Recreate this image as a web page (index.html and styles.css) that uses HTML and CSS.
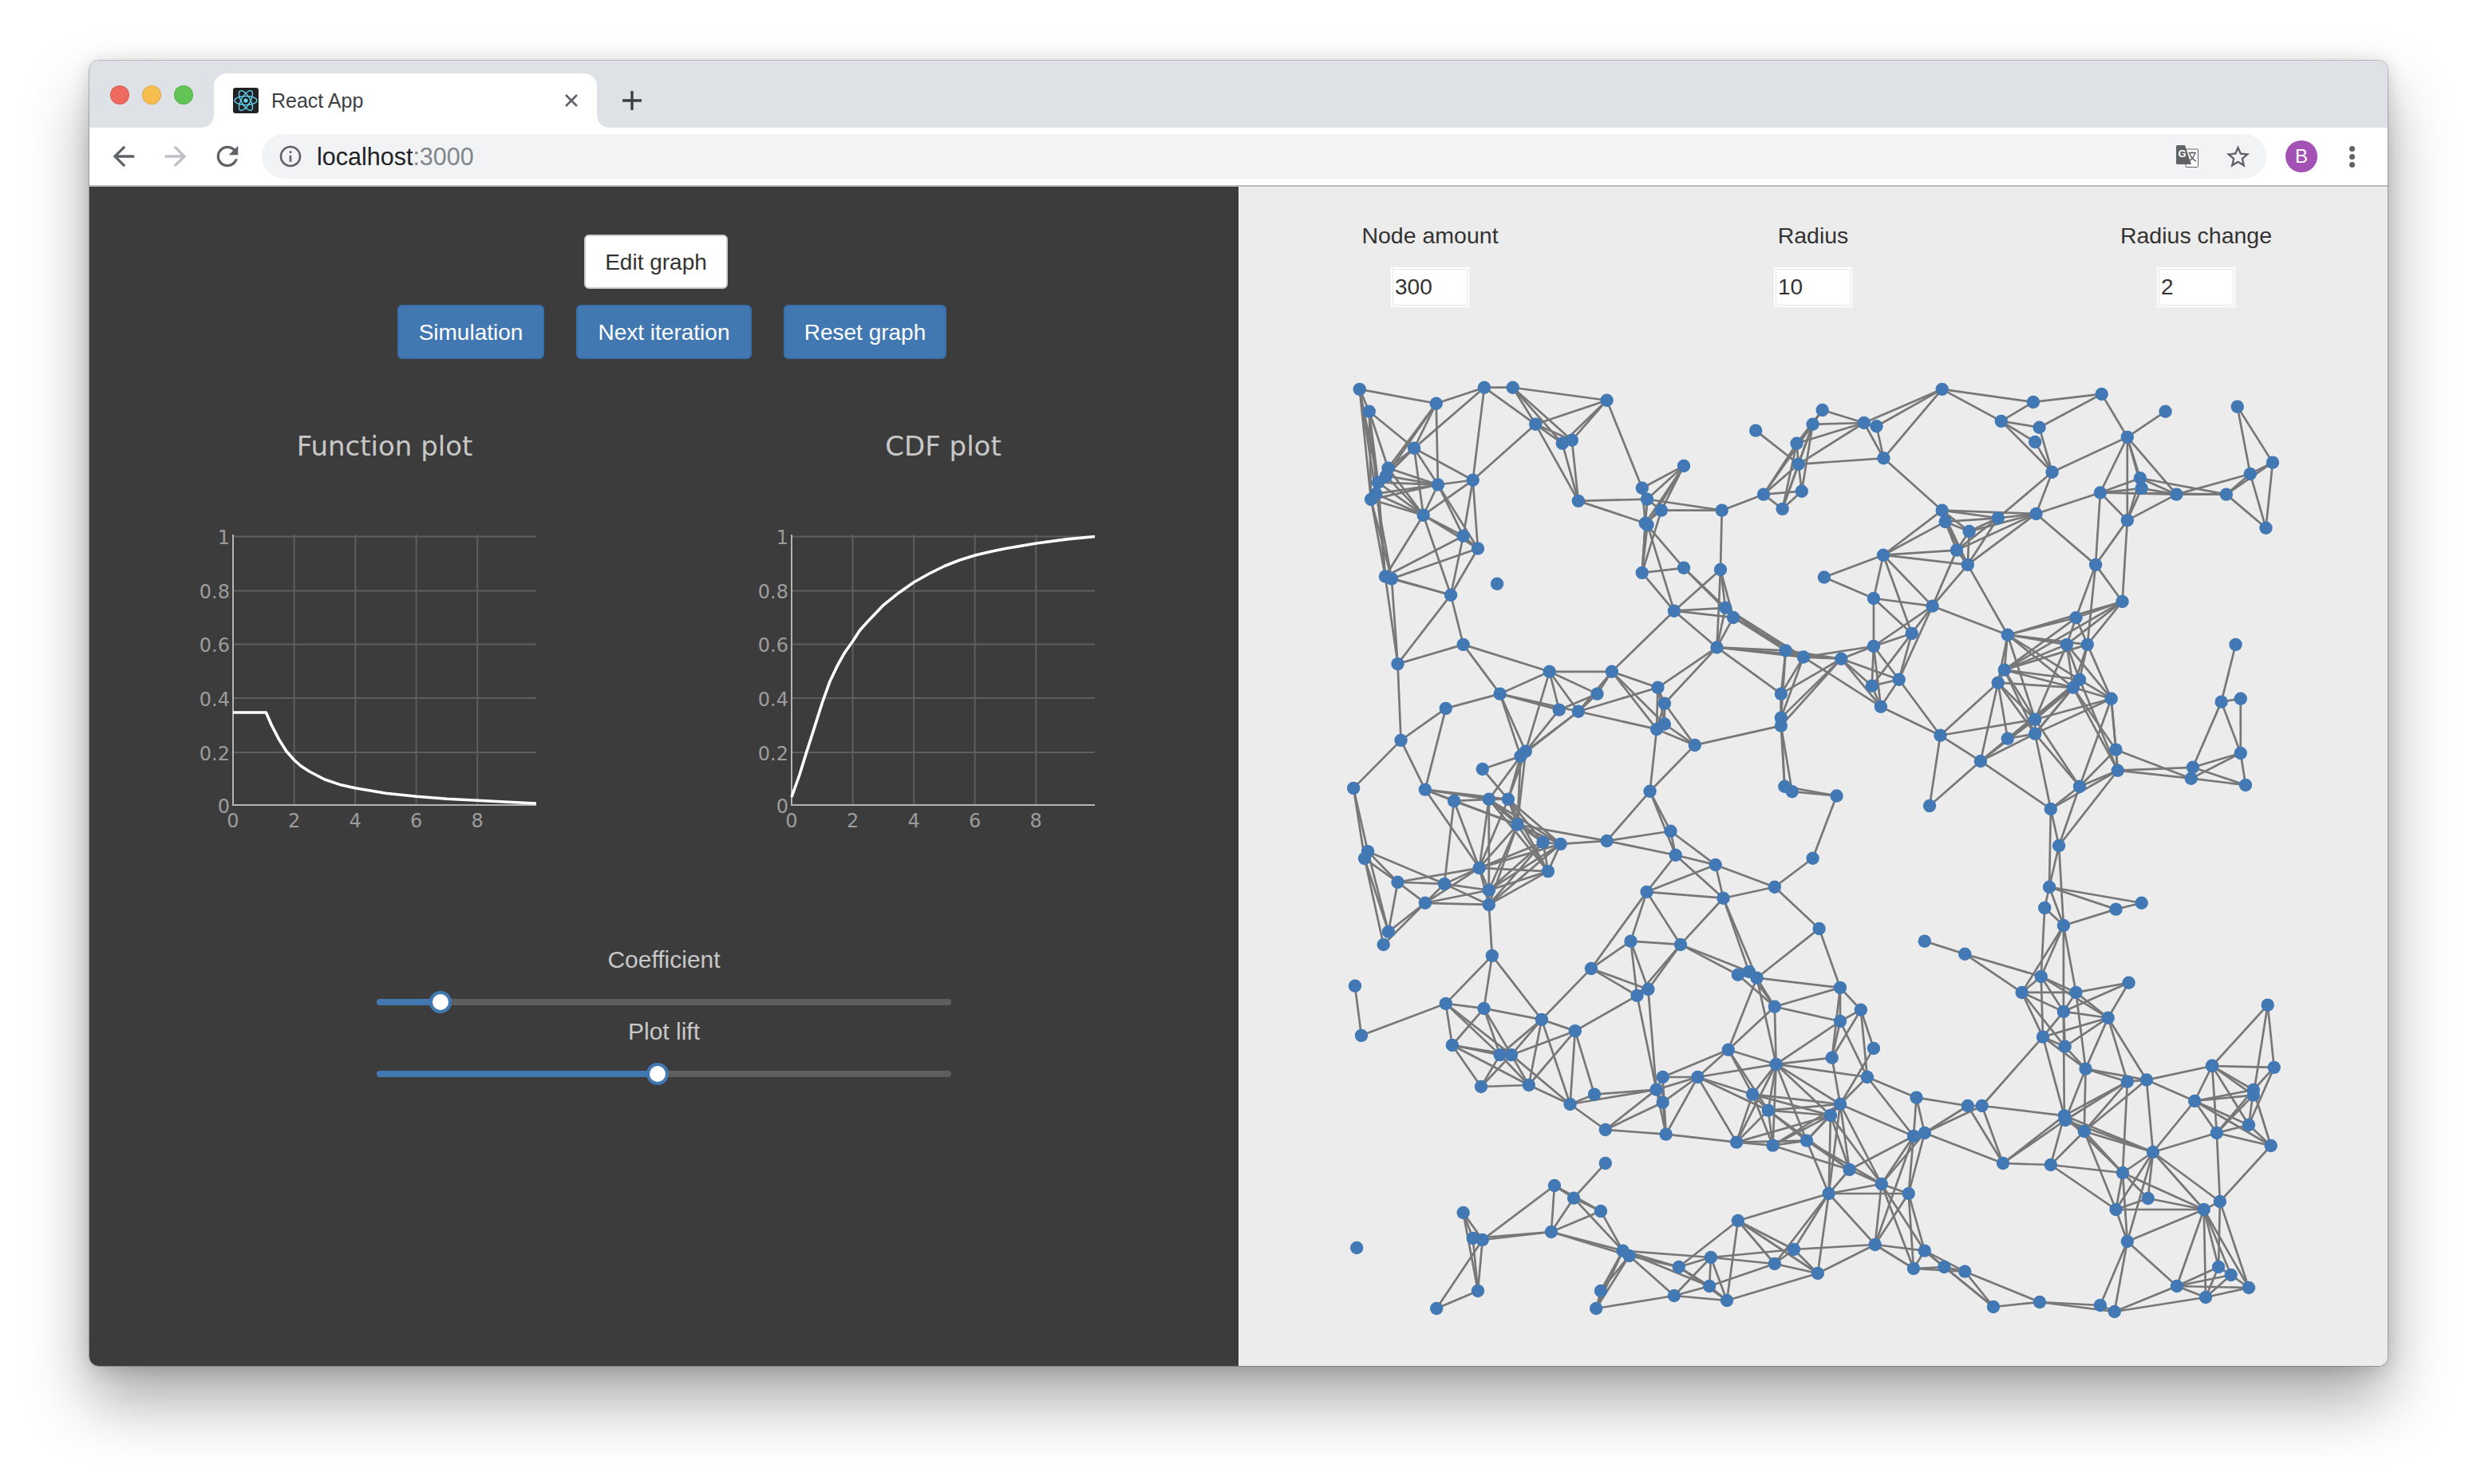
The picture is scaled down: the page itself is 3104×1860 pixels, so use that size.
FILE: index.html
```html
<!DOCTYPE html>
<html lang="en">
<head>
<meta charset="utf-8">
<title>React App</title>
<link rel="stylesheet" href="styles.css">
</head>
<body>
<div class="window">
  <div class="tabstrip">
    <div class="lights"><span class="light red"></span><span class="light yellow"></span><span class="light green"></span></div>
    <div class="tab">
      <svg class="favicon" viewBox="0 0 32 32"><rect width="32" height="32" rx="3" fill="#222"/><g fill="none" stroke="#61dafb" stroke-width="1.3"><ellipse cx="16" cy="16" rx="14" ry="5.6"/><ellipse cx="16" cy="16" rx="14" ry="5.6" transform="rotate(60 16 16)"/><ellipse cx="16" cy="16" rx="14" ry="5.6" transform="rotate(120 16 16)"/></g><circle cx="16" cy="16" r="2.6" fill="#61dafb"/></svg>
      <span class="tab-title">React App</span>
      <svg class="tab-close" viewBox="0 0 24 24"><path d="M5 5L19 19M19 5L5 19"/></svg>
    </div>
    <svg class="new-tab" viewBox="0 0 24 24"><path d="M12 1V23M1 12H23"/></svg>
  </div>
  <div class="toolbar">
    <svg class="nav" viewBox="0 0 24 24"><path d="M20 11H7.83l5.59-5.59L12 4l-8 8 8 8 1.41-1.41L7.83 13H20v-2z"/></svg>
    <svg class="nav nav-off" viewBox="0 0 24 24"><path d="M12 4l-1.41 1.41L16.17 11H4v2h12.17l-5.58 5.59L12 20l8-8z"/></svg>
    <svg class="nav" viewBox="0 0 24 24"><path d="M17.65 6.35C16.2 4.9 14.21 4 12 4c-4.42 0-7.99 3.58-7.99 8s3.57 8 7.99 8c3.73 0 6.84-2.55 7.73-6h-2.08c-.82 2.33-3.04 4-5.65 4-3.31 0-6-2.69-6-6s2.69-6 6-6c1.66 0 3.14.69 4.22 1.78L13 11h7V4l-2.35 2.35z"/></svg>
    <div class="omnibox">
      <svg class="info" viewBox="0 0 24 24"><path d="M11 7h2v2h-2zm0 4h2v6h-2zm1-9C6.48 2 2 6.48 2 12s4.48 10 10 10 10-4.48 10-10S17.52 2 12 2zm0 18c-4.41 0-8-3.59-8-8s3.59-8 8-8 8 3.59 8 8-3.59 8-8 8z"/></svg>
      <span class="url">localhost<span class="url-port">:3000</span></span>
      <svg class="translate" viewBox="0 0 28 28"><rect x="12" y="5" width="15.5" height="22.5" rx="1" fill="#fff" stroke="#5f6368" stroke-width="1"/><path d="M1.5 0H11L19 24H1.5A1.5 1.5 0 0 1 0 22.5V1.5A1.5 1.5 0 0 1 1.5 0Z" fill="#5f6368"/><text x="2.4" y="15" class="translate-g">G</text><path d="M15.5 9.5H25M20 8V10M17 10C18 14 21 18 25 20M23.5 10C22.5 14 20 17.5 16 20" fill="none" stroke="#5f6368" stroke-width="1.4"/></svg>
      <svg class="star" viewBox="0 0 24 24"><path d="M22 9.24l-7.19-.62L12 2 9.19 8.63 2 9.24l5.46 4.73L5.82 21 12 17.27 18.18 21l-1.63-7.03L22 9.24zM12 15.4l-3.76 2.27 1-4.28-3.32-2.88 4.38-.38L12 6.1l1.71 4.04 4.38.38-3.32 2.88 1 4.28L12 15.4z"/></svg>
    </div>
    <div class="avatar">B</div>
    <div class="dots"><span></span><span></span><span></span></div>
  </div>
  <div class="content">
    <section class="left">
      <div class="edit-row"><button class="btn btn-white">Edit graph</button></div>
      <div class="action-row">
        <button class="btn btn-blue btn-sim">Simulation</button>
        <button class="btn btn-blue btn-next">Next iteration</button>
        <button class="btn btn-blue btn-reset">Reset graph</button>
      </div>
      <div class="plots">
        <svg class="plot" viewBox="0 0 700 550">
          <text class="plot-title" x="350" y="61">Function plot</text>
          <path class="grid" d="M236.6 160V499M313.2 160V499M389.6 160V499M466.2 160V499M160 162.5H540M160 230.4H540M160 297.6H540M160 365H540M160 432.9H540"/>
          <path class="axis" d="M160 160V500M159 499H540"/>
          <g class="ytick"><text x="156" y="172">1</text><text x="156" y="240">0.8</text><text x="156" y="307">0.6</text><text x="156" y="375">0.4</text><text x="156" y="443">0.2</text><text x="156" y="509">0</text></g>
          <g class="xtick"><text x="160" y="527">0</text><text x="236.6" y="527">2</text><text x="313.2" y="527">4</text><text x="389.6" y="527">6</text><text x="466.2" y="527">8</text></g>
          <polyline class="curve" points="160,383 201.4,383 207.9,398 217.5,416.6 227,431.7 236.6,442.5 245,450 255.8,457 274.9,467 294,473.4 313.2,477.8 351.5,484.2 389.8,488.2 428,491.3 466.4,493.3 504.7,495.3 540,497"/>
        </svg>
        <svg class="plot" viewBox="0 0 700 550">
          <text class="plot-title" x="350" y="61">CDF plot</text>
          <path class="grid" d="M236.6 160V499M313.2 160V499M389.6 160V499M466.2 160V499M160 162.5H540M160 230.4H540M160 297.6H540M160 365H540M160 432.9H540"/>
          <path class="axis" d="M160 160V500M159 499H540"/>
          <g class="ytick"><text x="156" y="172">1</text><text x="156" y="240">0.8</text><text x="156" y="307">0.6</text><text x="156" y="375">0.4</text><text x="156" y="443">0.2</text><text x="156" y="509">0</text></g>
          <g class="xtick"><text x="160" y="527">0</text><text x="236.6" y="527">2</text><text x="313.2" y="527">4</text><text x="389.6" y="527">6</text><text x="466.2" y="527">8</text></g>
          <polyline class="curve" points="160,489 169.6,462 179,431.7 188.7,401.4 198.3,371 207.9,344.2 217.5,324 227,307.2 236.6,293.7 245.5,280 255.8,268.5 274.9,248.6 294,233.2 313.2,219.7 332.4,209 351.5,199.5 370.6,192 389.8,186 408.9,181.4 428,177.6 466.4,171 504.7,165.9 540,162.5"/>
        </svg>
      </div>
      <div class="sliders">
        <div class="slider">
          <div class="slider-label">Coefficient</div>
          <div class="track"><div class="track-fill" style="width:80px"></div><div class="handle" style="left:80px"></div></div>
        </div>
        <div class="slider">
          <div class="slider-label">Plot lift</div>
          <div class="track"><div class="track-fill" style="width:352px"></div><div class="handle" style="left:352px"></div></div>
        </div>
      </div>
    </section>
    <section class="right">
      <div class="fields">
        <label class="field"><span class="field-label">Node amount</span><input class="field-input" type="text" value="300"></label>
        <label class="field"><span class="field-label">Radius</span><input class="field-input" type="text" value="10"></label>
        <label class="field"><span class="field-label">Radius change</span><input class="field-input" type="text" value="2"></label>
      </div>
      <svg id="graph" class="graph" viewBox="1552 420 1440 1292"></svg>
    </section>
  </div>
</div>
<script src="graph.js"></script>
</body>
</html>
```

FILE: styles.css
```css
* { box-sizing: border-box; }
html, body { margin: 0; background: #fff; }
body { padding-top: 76px; height: 1860px; overflow: hidden; font-family: "Liberation Sans", Arial, sans-serif; }

.window {
  width: 2880px;
  height: 1636px;
  margin: 0 auto;
  display: flex;
  flex-direction: column;
  border-radius: 12px;
  overflow: hidden;
  position: relative;
}
body::before {
  content: "";
  position: absolute;
  left: 112px;
  top: 76px;
  width: 2880px;
  height: 1636px;
  border-radius: 12px;
  box-shadow: 0 0 0 1px rgba(0,0,0,.22), 0 4px 24px rgba(0,0,0,.16), 0 44px 80px rgba(0,0,0,.34);
}

.tabstrip { height: 84px; background: #dee1e6; display: flex; align-items: flex-start; flex: none; }
.lights { display: flex; gap: 16px; margin: 31px 0 0 26px; }
.light { width: 24px; height: 24px; border-radius: 50%; border: 1px solid rgba(0,0,0,.1); }
.red { background: #ee6a5f; }
.yellow { background: #f6be4f; }
.green { background: #61c454; }

.tab {
  position: relative;
  width: 480px;
  height: 68px;
  margin: 16px 0 0 26px;
  padding: 0 20px 0 24px;
  background: #fff;
  border-radius: 16px 16px 0 0;
  display: flex;
  align-items: center;
}
.tab::before, .tab::after {
  content: "";
  position: absolute;
  bottom: 0;
  width: 16px;
  height: 16px;
}
.tab::before { left: -16px; background: radial-gradient(circle at 0 0, transparent 15.5px, #fff 16.5px); }
.tab::after { right: -16px; background: radial-gradient(circle at 100% 0, transparent 15.5px, #fff 16.5px); }
.favicon { width: 32px; height: 32px; flex: none; }
.tab-title { margin-left: 16px; font-size: 25px; color: #3c4043; }
.tab-close { width: 24px; height: 24px; margin-left: auto; fill: none; stroke: #5f6368; stroke-width: 2.6; }
.new-tab { width: 24px; height: 24px; margin: 38px 0 0 32px; fill: none; stroke: #3c4043; stroke-width: 3.4; stroke-linecap: round; }

.toolbar {
  height: 74px;
  flex: none;
  background: #fff;
  border-bottom: 2px solid #bcbcbc;
  display: flex;
  align-items: center;
  padding-left: 23px;
}
.nav { width: 40px; height: 40px; fill: #5f6368; margin-right: 25px; flex: none; }
.nav-off { fill: #bdc1c6; }
.omnibox {
  width: 2512px;
  height: 56px;
  margin-left: -2px;
  background: #f1f3f4;
  border-radius: 28px;
  display: flex;
  align-items: center;
  padding: 0 18px 0 20px;
}
.info { width: 32px; height: 32px; fill: #5f6368; flex: none; }
.url { margin-left: 17px; font-size: 30.5px; color: #202124; }
.url-port { color: #80868b; }
.translate { width: 28px; height: 28px; margin-left: auto; }
.translate-g { font: bold 13px "Liberation Sans", sans-serif; fill: #fff; }
.star { width: 35px; height: 35px; margin-left: 32px; fill: #5f6368; }
.avatar {
  width: 40px;
  height: 40px;
  margin-left: 24px;
  border-radius: 50%;
  background: #a351b5;
  color: #fff;
  font-size: 24px;
  display: flex;
  align-items: center;
  justify-content: center;
}
.dots { margin-left: 40px; display: flex; flex-direction: column; gap: 3px; }
.dots span { width: 7px; height: 7px; border-radius: 50%; background: #5f6368; }

.content { flex: 1; display: flex; min-height: 0; }
.left { width: 1440px; background: #3c3c3c; padding: 60px 20px 0; }
.right { width: 1440px; background: #ececec; }

.edit-row { display: flex; justify-content: center; padding-right: 20px; }
.action-row { display: flex; justify-content: center; gap: 40px; padding-left: 20px; margin-top: 20px; }
.btn {
  height: 68px;
  padding: 2px 0 0;
  border-radius: 6px;
  font: 28px "Liberation Sans", Arial, sans-serif;
  cursor: pointer;
}
.btn-white { width: 180px; background: #fff; border: 2px solid #ccc; color: #333; }
.btn-blue { background: #4278b1; border: 2px solid #3a6ea7; color: #fff; }
.btn-sim { width: 184px; }
.btn-next { width: 220px; }
.btn-reset { width: 204px; }

.plots { display: flex; margin-top: 60px; }
.plot { width: 700px; height: 550px; flex: none; display: block; }
.plot-title { font: 34px "DejaVu Sans", Verdana, sans-serif; fill: #c8c8c8; text-anchor: middle; }
.grid { fill: none; stroke: #5e5e5e; stroke-width: 2; }
.axis { fill: none; stroke: #b4b4b4; stroke-width: 2; }
.ytick text, .xtick text { font: 24px "DejaVu Sans", Verdana, sans-serif; fill: #9c9c9c; }
.ytick text { text-anchor: end; }
.xtick text { text-anchor: middle; }
.curve { fill: none; stroke: #fff; stroke-width: 3.6; stroke-linejoin: round; }

.sliders { width: 720px; margin: 123px auto 0; }
.slider { padding-bottom: 13px; }
.slider-label { height: 40px; line-height: 40px; font-size: 30px; color: #c8c8c8; text-align: center; }
.track { position: relative; height: 8px; margin-top: 29px; background: #5e5e5e; border-radius: 4px; }
.track-fill { height: 8px; background: #4278b1; border-radius: 4px; }
.handle {
  position: absolute;
  top: -10px;
  width: 28px;
  height: 28px;
  margin-left: -14px;
  border-radius: 50%;
  background: #fff;
  border: 4px solid #4278b1;
}

.fields { display: grid; grid-template-columns: repeat(3, 480px); padding-top: 41px; }
.field { display: flex; flex-direction: column; align-items: center; }
.field-label { height: 40px; line-height: 40px; font-size: 28.5px; color: #333; }
.field-input {
  width: 98px;
  height: 50px;
  margin: 20px 0 1px;
  padding: 0 3px;
  border: 2px solid #fff;
  box-shadow: inset 0 0 0 1px #e6e6e6;
  background: #fff;
  font: 28px "Liberation Sans", Arial, sans-serif;
  color: #333;
  outline: none;
}
.graph { display: block; width: 1440px; height: 1292px; margin-top: 34px; }
.edge { stroke: #777; stroke-width: 2.7; }
.node { fill: #4279b5; }
```

FILE: graph.js
```js
// Node positions are read per region of the canvas: [originX, originY, scaleX, scaleY]
var regions = {
  a: [1660, 260, 2.24, 2.8],
  b: [2260, 260, 2.24, 2.8],
  c: [1660, 800, 2.24, 2.8],
  d: [2260, 800, 2.24, 2.8],
  e: [1660, 1180, 2.24, 3],
  f: [2260, 1180, 2.24, 3]
};
var raw = {
  a: "1 98 638 2 125 716 3 313 688 4 448 632 5 528 632 6 792 677 7 592 761 8 667 828 9 694 817 10 251 845 11 178 915 12 172 942 13 150 965 14 144 1005 15 130 1025 16 318 973 17 416 957 18 277 1080 19 389 1153 20 430 1197 21 170 1295 22 188 1303 23 354 1360 24 484 1321 25 712 1030 26 891 985 27 1008 907 28 905 1024 29 945 1063 30 900 1108 52 906 1114 31 1115 1063 32 891 1282 33 1008 1265 34 1111 1271 35 981 1416 36 1125 1405 37 1147 1439 38 1232 1007 39 1339 996 40 1285 1058 41 1330 901 42 1325 828 43 1210 783 44 1370 761 45 1397 711 46 1514 756 47 1549 768 48 1569 880",
  b: "1 389 638 2 645 683 3 837 655 4 555 750 5 662 772 6 650 823 7 698 929 8 909 806 9 1016 716 10 1218 699 30 1317 895 31 1254 935 32 945 950 33 949 986 34 833 1001 35 1047 1007 36 1187 1007 37 909 1098 38 1298 1125 11 389 1063 12 398 1103 13 546 1090 14 653 1075 15 465 1137 16 430 1203 17 461 1254 18 224 1220 19 58 1298 20 197 1372 21 362 1399 22 304 1495 24 573 1500 25 765 1440 26 895 1383 27 820 1254 28 739 1534 29 797 1534",
  c: "1 389 22 2 205 90 3 631 117 4 806 117 5 492 195 6 340 246 7 765 195 8 658 251 9 712 257 10 935 173 11 954 229 12 954 301 13 932 319 14 1101 32 15 1294 43 16 1344 66 17 1450 72 18 1541 28 19 1281 195 20 1281 279 21 1281 307 22 1536 167 23 1561 240 24 1039 375 25 214 358 26 564 397 27 550 414 28 443 459 29 81 526 30 282 531 31 363 571 32 461 565 33 515 565 34 913 537 35 1291 520 36 1312 538 37 1437 553 38 541 654 39 613 716 40 662 722 41 792 711 42 971 677 43 985 761 44 1097 795 45 121 748 46 112 773 47 205 856 48 336 862 49 434 806 50 627 818 51 461 884 52 282 929 53 461 935 54 904 890 55 1119 912 56 1263 873 57 1370 772 58 179 1030 59 165 1075 60 470 1114 61 859 1063 62 999 1075 63 1388 1019 64 748 1159 65 1160 1181 66 1191 1170 67 1213 1192 68 908 1232 69 877 1254 70 1447 1226 71 1263 1293 72 1505 1304 73 1447 1344 74 85 1220 75 340 1282 76 447 1299 77 609 1338 78 703 1378 79 103 1394 80 358 1428 81 492 1462 82 524 1462 83 1133 1444 84 1267 1495 85 1424 1472 86 1541 1439 87 949 1540 88 1047 1540 89 1523 1540",
  d: "1 268 145 2 384 341 3 497 431 4 354 588 5 564 111 6 546 156 7 775 145 8 757 173 9 864 212 10 650 285 11 650 335 12 573 352 13 877 391 14 882 464 15 775 520 16 694 599 17 717 728 18 690 873 19 677 946 20 730 1008 21 877 951 22 949 929 23 1093 453 24 1088 492 25 1227 403 26 1241 515 27 1173 223 28 1227 212 29 1213 22 30 340 1063 31 453 1108 32 667 1187 33 613 1243 34 765 1243 35 913 1209 36 730 1310 37 855 1332 38 672 1399 39 734 1433 40 792 1511 41 909 1556 42 963 1550 43 1147 1500 44 1321 1506 45 1303 1287",
  e: "1 689 612 2 757 575 3 931 557 4 949 605 5 1201 575 6 1245 635 7 1447 612 8 1420 654 9 1156 755 10 1258 767 11 1353 749 12 958 725 13 788 708 14 1473 858 15 1415 948 16 1563 912 17 1545 1140 18 1317 1158 19 1263 1212 20 1384 1248 21 1160 1050 22 1084 1188 23 994 1224 24 1080 1296 25 981 1332 26 1129 1350 27 837 1163 28 855 1182 29 775 1314 30 762 1380 31 788 834 32 645 918 33 699 965 34 775 1014 35 636 1092 36 416 1116 37 443 1122 38 389 1020 39 430 1314 40 314 1380 41 90 1152 90 439 546 91 573 540",
  f: "1 317 587 2 461 618 3 501 618 4 295 948 5 340 1163 6 309 1230 7 395 1224 8 453 1241 9 533 1374 10 663 1356 11 833 1368 12 873 1392 13 309 732 14 340 720 15 560 834 16 694 840 17 732 655 38 735 672 18 788 714 19 896 870 20 981 792 21 967 966 22 877 1008 23 1124 1008 24 1169 978 25 909 1128 26 1048 1296 27 1129 1338 28 1165 1224 29 1200 1254 30 1250 1302 31 1160 720 32 1250 690 33 1312 768 34 1098 600 35 1263 558 36 1263 578 37 1147 468"
};
var edges = [
"a1-a3 a3-a4 a4-a5 a5-a6 a1-a2 a1-a14 a1-a15 a1-a13 a2-a10 a2-a13 a2-a15 a2-a21 a2-a11 a3-a10 a3-a11 a3-a12 a3-a16 a4-a10 a4-a17 a4-a7 a5-a7 a5-a8 a5-a9 a6-a7 a6-a8 a6-a9 a6-a26 a7-a8 a7-a9 a7-a17 a7-a25 a8-a25 a9-a25",
"a10-a11 a10-a12 a10-a13 a10-a16 a10-a17 a10-a18 a11-a16 a12-a16 a13-a16 a14-a16 a15-a16 a11-a18 a12-a18 a13-a18 a14-a18 a15-a18 a16-a17 a16-a18 a16-a19 a16-a20 a17-a18 a17-a19 a17-a20 a18-a19 a18-a20 a18-a21 a18-a23 a19-a21 a19-a20 a19-a23 a20-a22 a20-a23 a21-a23 a22-a23 a21-c2 a22-c2 a23-c2 a23-c1 a15-a22 a14-a22 a13-a21 a15-a21",
"c1-c2 c1-c3 c1-c5 a25-a28 a25-a30 a26-a27 a26-a28 a26-a30 a27-a28 a27-a29 a27-a30 a27-a52 a28-a29 a28-a31 a28-a30 a29-a31 a29-a30 a30-a32 a52-a32 a29-a32 a30-a33 a52-a35 a28-a32 a32-a33 a32-a35 a33-a36 a33-a37 a31-a34 a34-a35 a34-a36 a34-a37 a34-c14 a35-a36 a35-a37 a35-c14 a35-c4 a36-c14 a37-c14 a36-c15 a37-c15 a36-c16 a37-c16",
"a31-a38 a38-a39 a38-a40 a38-a41 a38-a42 a38-a44 a39-a40 a39-a41 a39-a44 a40-a41 a40-a42 a40-a44 a41-a42 a41-a43 a41-a44 a41-a46 a41-a48 a42-a44 a42-a45 a42-a46 a44-a45 a44-a46 a45-a46 a46-a47 a46-a48 a47-a48 a46-b1 a47-b1 a48-b1 a48-b11",
"b1-b2 b1-b4 b2-b3 b2-b4 b3-b5 b3-b8 b4-b5 b4-b6 b4-b7 b5-b7 b6-b7 b7-b8 b7-b13 b7-b14 b8-b9 b8-b34 b8-b32 b8-b33 b8-b37 b8-b35 b32-b34 b32-b35 b32-b36 b32-b37 b33-b34 b33-b35 b33-b37 b34-b35 b34-b36 b34-b37 b34-b14 b34-b27 b35-b37 b35-b36 b35-b31 b36-b31 b36-b30 b36-b38 b31-b30 b31-b38 b30-b38 b10-b31 b10-b30 b37-b27 b37-b26 b27-b26 b27-b25 b27-b29 b26-b25 b26-b24",
"b11-b12 b11-b13 b11-b14 b11-b15 b11-b18 b11-b17 b12-b13 b12-b15 b12-b16 b12-b17 b12-b18 b13-b14 b13-b15 b13-b16 b13-b17 b14-b15 b14-b16 b14-b17 b15-b16 b15-b17 b16-b17 b16-b18 b16-b21 b17-b18 b17-b21 b17-b24 b14-b27 b18-b19 b18-b20 b18-b21 b18-b22 b19-b20 b20-b21 b20-b22 b20-c18 b21-b22 b21-c18 b21-b24 b22-c18 b21-d1 b22-d1 b22-c22 c18-c16 b24-b25 b24-b28 b24-b29 b25-b28 b25-b29 b26-b28 b26-b29 b26-d5",
"c2-c25 c3-c4 c3-c5 c3-c7 c3-c8 c3-c9 c3-c26 c4-c7 c4-c9 c4-c13 c4-c12 c4-c10 c5-c6 c5-c8 c5-c9 c5-c26 c5-c27 c6-c25 c6-c30 c7-c8 c7-c9 c8-c26 c9-c10 c9-c13 c9-c26 c9-c27 c10-c11 c10-c12 c10-c13 c11-c12 c11-c13 c11-c24 c12-c24 c13-c24 c13-c34 c10-c14 c11-c14 c14-c15 c14-c16 c14-c17 c14-c19 c15-c16 c15-c17 c15-c19 c15-c20 c16-c17 c16-c19 c16-c20 c16-c23 c17-c18 c17-c19 c17-c20 c17-c21 c17-c22 c17-c23 c18-c22 c18-c23 c19-c20 c19-c21 c20-c35 c21-c24 c21-c35 c21-c36 c24-c34 c25-c29 c25-c30 c26-c27 c27-c28 c27-c32 c27-c33 c26-c33 c26-c38 c27-c38 c28-c33",
"c29-c45 c29-c46 c30-c31 c30-c32 c30-c33 c30-c38 c30-c49 c31-c32 c31-c38 c31-c48 c31-c49 c32-c33 c32-c38 c32-c39 c32-c40 c32-c50 c32-c49 c32-c51 c33-c39 c33-c40 c33-c38 c33-c50 c33-c49 c38-c39 c38-c40 c38-c50 c38-c41 c38-c49 c38-c51 c38-c53 c39-c40 c39-c50 c39-c49 c39-c51 c39-c53 c40-c41 c40-c49 c40-c50 c40-c51 c40-c53 c41-c34 c41-c42 c41-c43 c34-c42 c34-c43 c42-c43 c42-c44 c43-c44 c43-c54 c43-c55 c44-c54 c44-c55 c44-c56 c54-c55 c54-c61 c54-c62 c54-c64 c55-c56 c55-c62 c55-c66 c55-c67 c56-c57 c57-c37 c37-c35 c37-c36 c35-c36 c56-c63",
"c45-c46 c45-c47 c45-c48 c45-c58 c46-c47 c46-c58 c46-c59 c47-c48 c47-c49 c47-c52 c47-c58 c48-c49 c48-c51 c48-c52 c48-c53 c49-c50 c49-c51 c49-c52 c49-c53 c50-c51 c50-c53 c51-c52 c51-c53 c52-c53 c52-c58 c52-c59 c53-c60 c60-c75 c60-c76 c60-c77 c61-c62 c61-c64 c61-c68 c61-c69 c62-c65 c62-c66 c62-c68 c62-c69 c63-c67 c63-c70 c64-c68 c64-c69 c64-c77 c68-c69 c69-c78 c69-e3 c68-e3 c65-c67 c65-c71 c66-c67 c66-c71 c67-c71 c67-c70 c67-c83 c67-c84 c70-c71 c70-c72 c70-c73 c70-c85 c71-c73 c71-c83 c71-c84 c72-c73 c72-c86 c72-c89 c72-c85 c73-c84 c73-c85 c73-c89 c74-c79 c75-c76 c75-c79 c75-c80 c75-c81 c75-c82 c76-c80 c76-c81 c76-c82 c76-c77 c77-c78 c77-c81 c77-c82 c77-e91 c77-e1 c78-c82 c78-e91 c78-e1 c78-e2 c80-c81 c80-c82 c80-e90 c80-e91 c81-e90 c82-e90 c81-e91 c82-e91 c82-e1 c81-c82 e90-e91 e91-e1",
"e1-e2 e1-e3 e1-e13 e2-e3 e13-e3 e13-e4 e13-e12 e3-e4 e3-c87 e4-c87 e3-e12 e4-e12 c87-e12 c87-c88 c87-c83 c88-c83 c88-c84 c88-e3 c88-e4 c88-e12 c88-e5 c88-e6 c88-e9 c83-e5 c83-e6 c83-c84 c84-e5 c84-e6 c84-e7 c84-e8 c84-e9 c84-e10 c84-e11 c84-c85 c84-c89 e5-e6 e5-e7 e5-e9 e5-e10 e5-e8 e6-e7 e6-e8 e6-e9 e6-e10 e6-e11 e6-e14 e7-e8 e7-c85 e7-c89 e7-c86 e7-e10 e7-e11 e7-e14 e7-e15 e7-e16 e8-e9 e8-e10 e8-e11 e8-e14 e8-e15 e8-e16 e9-e10 e9-e11 e10-e11 e11-e14 e11-e16 e11-e15 e12-e9 e10-e14 e14-e15 e14-e16 e15-e16 e15-e17 e15-f4 e15-e18 e15-e19 e15-e20 e15-e21 e16-f4 e16-e17 e16-f13 e16-f14 e17-e18 e17-e20 e17-f4 e17-f5 e17-f6 e18-e19 e18-e20 e18-e21 e18-e22 e19-e20 e19-e21 e19-e22 e19-e24 e20-e26 e20-e21 e21-e23 e21-e26 e22-e23 e22-e24 e22-e25 e22-e26 e22-e27 e23-e24 e23-e26 e23-e27 e23-e28 e24-e25 e24-e26 e24-e27 e25-e26 e25-e28 e25-e30 e27-e28 e27-e29 e27-e30 e28-e29 e28-e30 e29-e30 e27-e33 e27-e34 e35-e27 e35-e28 e31-e33 e32-e33 e32-e34 e32-e35 e32-e37 e33-e34 e33-e35 e34-e35 e35-e36 e35-e37 e36-e37 e36-e38 e37-e38 e38-e39 e36-e39 e37-e39 e37-e40 e39-e40",
"c17-d1 c18-d1 c22-d1 c22-c23 d1-c23 d1-d2 c23-d2 d2-d3 d2-d4 d2-d6 d2-d10 d3-d4 d3-d6 d3-d10 d3-d11 d3-d12 d3-d16 d5-d6 d5-d8 d5-d7 d5-d10 d5-d11 d5-b24 d5-b25 d5-b28 d5-b29 d6-d12 d6-d11 d6-d10 d6-d8 d6-b24 b24-d10 b24-d7 b24-d8 b28-d7 b28-d8 b29-d7 b29-d8 b28-d10 b29-d9 b28-d9 d7-d8 d7-d9 d8-d9 d7-d10 d8-d10 d7-d11 d8-d11 d7-d12 d8-d12 d9-d10 d9-d11 d9-d13 d9-d14 d9-d15 d8-d13 d8-d14 d7-d14 d10-d11 d10-d12 d10-d15 d11-d12 d11-d15 d11-d16 d13-d14 d13-d15 d13-d24 d14-d15 d14-d16 d14-d17 d14-d23 d14-d24 d15-d16 d15-d17 d16-d17 d16-d18 d17-d18 d17-d20 d18-d19 d18-d20 d18-d21 d18-d22 d19-d20 d19-d32 d20-d21 d21-d22 d20-d32 d20-d33 d20-d34 d20-d36 d23-d24 d23-d25 d23-d26 d24-d25 d24-d26 d25-d26 d25-d28 d25-d27 d23-d27 d27-d28 d27-d29",
"d30-d31 d31-d32 d31-d33 d32-d33 d32-d34 d32-d36 d32-d37 d32-d38 d33-d34 d33-d36 d33-d38 d33-d39 d34-d35 d34-d36 d34-d37 d34-d40 d35-d36 d35-d37 d36-d37 d36-d38 d36-d39 d36-f17 d37-d38 d37-d39 d37-d40 d37-d41 d37-d42 d38-d39 d38-d40 d38-f3 d38-f17 d39-d40 d40-d41 d40-d42 d41-d42 d40-f38 d40-f18 d41-f17 d41-f38 d41-f18 d41-f19 d42-f34 d42-f37 d42-f20 d42-f18 f37-d44 f37-d45 d44-d45 f37-f34 f37-f31 f37-f32 f37-f35 f37-f36 d44-f35 d44-f32 d45-f36",
"c89-f1 c89-f13 e7-f13 e14-f13 f1-f2 f1-f13 f1-f14 f13-f14 f13-e17 f2-f3 f2-f14 f3-f14 f3-f17 f3-f15 f2-f15 f14-f15 f14-f4 f13-f4 f4-f5 f4-f6 e16-f5 e16-f6 f5-f6 f5-f7 f5-f8 f5-f9 f6-f7 f6-f8 f7-f8 f7-f9 f8-f9 f8-f10 f9-f10 f10-f11 f10-f12 f11-f12 f11-f25 f12-f25 f12-f26 f12-f27 f15-f16 f15-f17 f15-f38 f16-f17 f16-f18 f16-f19 f16-f22 f17-f18 f38-f18 f17-f19 f17-f20 f38-f20 f18-f19 f18-f20 f18-f22 f19-f20 f19-f21 f19-f22 f19-f23 f19-f25 f20-f21 f20-f22 f20-f23 f20-f24 f20-f25 f20-f31 f20-f34 f21-f22 f21-f23 f22-f23 f22-f25 f23-f24 f23-f25 f23-f26 f23-f27 f23-f28 f23-f29 f23-f30 f24-f28 f24-f33 f24-f31 f24-f30 f25-f26 f26-f27 f26-f28 f26-f29 f26-f30 f27-f29 f27-f30 f27-f28 f28-f29 f29-f30 f31-f32 f31-f33 f31-f34 f31-f35 f31-f36 f32-f33 f32-f34 f32-f35 f33-f34 f33-f35 f34-f35 f34-f36"
].join(" ").split(" ");

var nodes = {};
Object.keys(raw).forEach(function (k) {
  var r = regions[k], p = raw[k].split(" ").map(Number);
  for (var i = 0; i < p.length; i += 3) {
    nodes[k + p[i]] = [r[0] + p[i + 1] / r[2], r[1] + p[i + 2] / r[3]];
  }
});

var NS = "http://www.w3.org/2000/svg";
var svg = document.getElementById("graph");
edges.forEach(function (e) {
  var ends = e.split("-"), p = nodes[ends[0]], q = nodes[ends[1]];
  if (!p || !q) { console.error("missing node in edge " + e); return; }
  var l = document.createElementNS(NS, "line");
  l.setAttribute("class", "edge");
  l.setAttribute("x1", p[0]); l.setAttribute("y1", p[1]);
  l.setAttribute("x2", q[0]); l.setAttribute("y2", q[1]);
  svg.appendChild(l);
});
Object.keys(nodes).forEach(function (k) {
  var c = document.createElementNS(NS, "circle");
  c.setAttribute("class", "node");
  c.setAttribute("cx", nodes[k][0]); c.setAttribute("cy", nodes[k][1]);
  c.setAttribute("r", 8.2);
  svg.appendChild(c);
});
```
